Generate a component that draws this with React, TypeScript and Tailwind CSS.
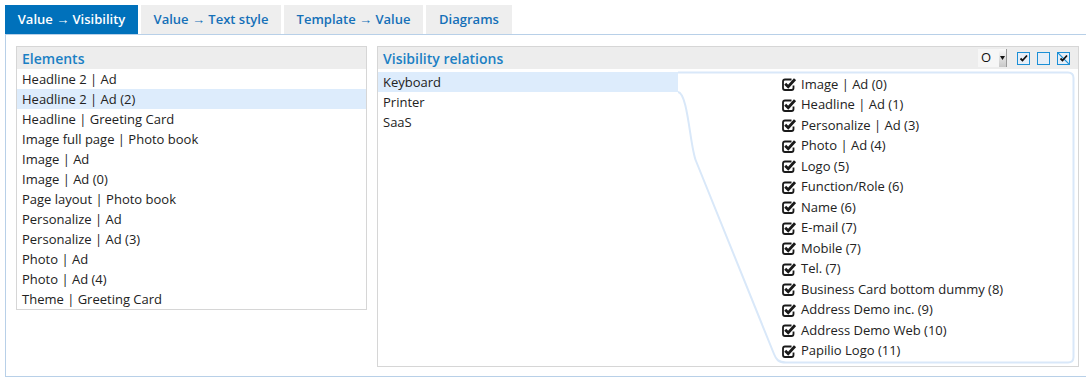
const tabs = [
  { label: 'Value → Visibility', w: 'w-[133px]' },
  { label: 'Value → Text style', w: 'w-[140px]' },
  { label: 'Template → Value', w: 'w-[139px]' },
  { label: 'Diagrams', w: 'w-[86px]' },
];

const elements = [
  'Headline 2 | Ad',
  'Headline 2 | Ad (2)',
  'Headline | Greeting Card',
  'Image full page | Photo book',
  'Image | Ad',
  'Image | Ad (0)',
  'Page layout | Photo book',
  'Personalize | Ad',
  'Personalize | Ad (3)',
  'Photo | Ad',
  'Photo | Ad (4)',
  'Theme | Greeting Card',
];

const values = ['Keyboard', 'Printer', 'SaaS'];

const relations = [
  'Image | Ad (0)',
  'Headline | Ad (1)',
  'Personalize | Ad (3)',
  'Photo | Ad (4)',
  'Logo (5)',
  'Function/Role (6)',
  'Name (6)',
  'E-mail (7)',
  'Mobile (7)',
  'Tel. (7)',
  'Business Card bottom dummy (8)',
  'Address Demo inc. (9)',
  'Address Demo Web (10)',
  'Papilio Logo (11)',
];

function CheckIcon() {
  return (
    <svg width="14" height="14" viewBox="0 0 14 14" className="shrink-0">
      <path
        d="M9.5 2.5 H3 Q1 2.5 1 4.5 V11 Q1 13 3 13 H9.5 Q11.5 13 11.5 11 V8.5"
        fill="none"
        stroke="#1a1a1a"
        strokeWidth="1.8"
      />
      <path d="M3.2 6.8 L6.2 9.8 L13 2.2" fill="none" stroke="#1a1a1a" strokeWidth="2.8" />
    </svg>
  );
}

function SmallBox({ kind }: { kind: 'on' | 'off' | 'toggle' }) {
  return (
    <span className="relative w-[13px] h-[13px] border border-[#1b8fd6] bg-[#e6eef7] block">
      {kind !== 'off' && (
        <svg width="11" height="11" viewBox="0 0 11 11" className="absolute left-0 top-0">
          {kind === 'toggle' && <path d="M0 0 L11 11" stroke="#1b8fd6" strokeWidth="1.2" />}
          <path d="M2.5 5.5 L4.5 7.5 L9 2.5" fill="none" stroke="#111" strokeWidth="1.8" />
        </svg>
      )}
    </span>
  );
}

export default function App() {
  return (
    <div
      className="w-screen h-screen overflow-hidden bg-white text-[13px] text-[#222]"
      style={{ fontFamily: '"Open Sans", "Liberation Sans", sans-serif' }}
    >
      <div className="pt-[5px] pl-[5px]">
        {/* tabs */}
        <div className="flex gap-[3px] h-[30px] border-b border-[#b8d0e8] w-[1090px]">
          {tabs.map((t, i) => (
            <div
              key={t.label}
              className={
                i === 0
                  ? `${t.w} flex items-center justify-center font-semibold bg-[#0071bb] text-white`
                  : `${t.w} flex items-center justify-center font-semibold bg-[#eeeeee] text-[#1570b8]`
              }
            >
              {t.label}
            </div>
          ))}
        </div>

        {/* main */}
        <div className="w-[1090px] h-[343px] border-l border-b border-[#b8d0e8] -mt-px pt-[12px] pl-[10px] flex gap-[10px] items-start">
          {/* Elements */}
          <div className="w-[351px] border border-[#d6d6d6]">
            <div className="h-[22px] bg-[#ededed] px-[5px] flex items-center text-[14px] font-semibold text-[#1b80c4]">
              Elements
            </div>
            {elements.map((e, i) => (
              <div
                key={e}
                className={
                  i === 1
                    ? 'h-[20px] leading-[20px] px-[5px] bg-[#ddecfc]'
                    : 'h-[20px] leading-[20px] px-[5px]'
                }
              >
                {e}
              </div>
            ))}
          </div>

          {/* Visibility relations */}
          <div className="w-[702px] border border-[#d6d6d6]">
            <div className="h-[22px] bg-[#ededed] pl-[5px] pr-[8px] flex items-center">
              <span className="text-[14px] font-semibold text-[#1b80c4]">Visibility relations</span>
              <div className="ml-auto flex items-center">
                <div className="flex items-center h-[18px]">
                  <span className="w-[21px] h-[18px] bg-[#f6f6f6] flex items-center pl-[3px] text-[13px] text-[#111]">O</span>
                  <span className="w-[8px] h-[18px] bg-gradient-to-b from-[#fafafa] to-[#c8c8c8] border-r border-[#999] flex items-center justify-center">
                    <svg width="5" height="4" viewBox="0 0 5 4">
                      <path d="M0 0 H5 L2.5 4 Z" fill="#111" />
                    </svg>
                  </span>
                </div>
                <div className="flex gap-[7px] ml-[10px]">
                  <SmallBox kind="on" />
                  <SmallBox kind="off" />
                  <SmallBox kind="toggle" />
                </div>
              </div>
            </div>
            <div className="relative h-[297px] pt-[3px] flex">
              <svg className="absolute left-0 top-0 pointer-events-none" width="702" height="297" viewBox="0 0 702 297">
                <path
                  d="M300 3.5 H690 Q695.5 3.5 695.5 9 V288 Q695.5 293.5 690 293.5 H408 C400 293.5 398 290 396 285 L318 92 C312 78 310 24 300 23"
                  fill="none"
                  stroke="#d9e8f9"
                  strokeWidth="2"
                />
              </svg>
              <div className="w-[300px] relative">
                {values.map((v, i) => (
                  <div
                    key={v}
                    className={
                      i === 0
                        ? 'h-[20px] leading-[20px] px-[5px] bg-[#ddecfc]'
                        : 'h-[20px] leading-[20px] px-[5px]'
                    }
                  >
                    {v}
                  </div>
                ))}
              </div>
              <div className="relative flex-1 pl-[104px] pt-[2px]">
                {relations.map((r) => (
                  <div key={r} className="h-[20.5px] flex items-center gap-[5px]">
                    <CheckIcon />
                    <span>{r}</span>
                  </div>
                ))}
              </div>
            </div>
          </div>
        </div>
      </div>
    </div>
  );
}
